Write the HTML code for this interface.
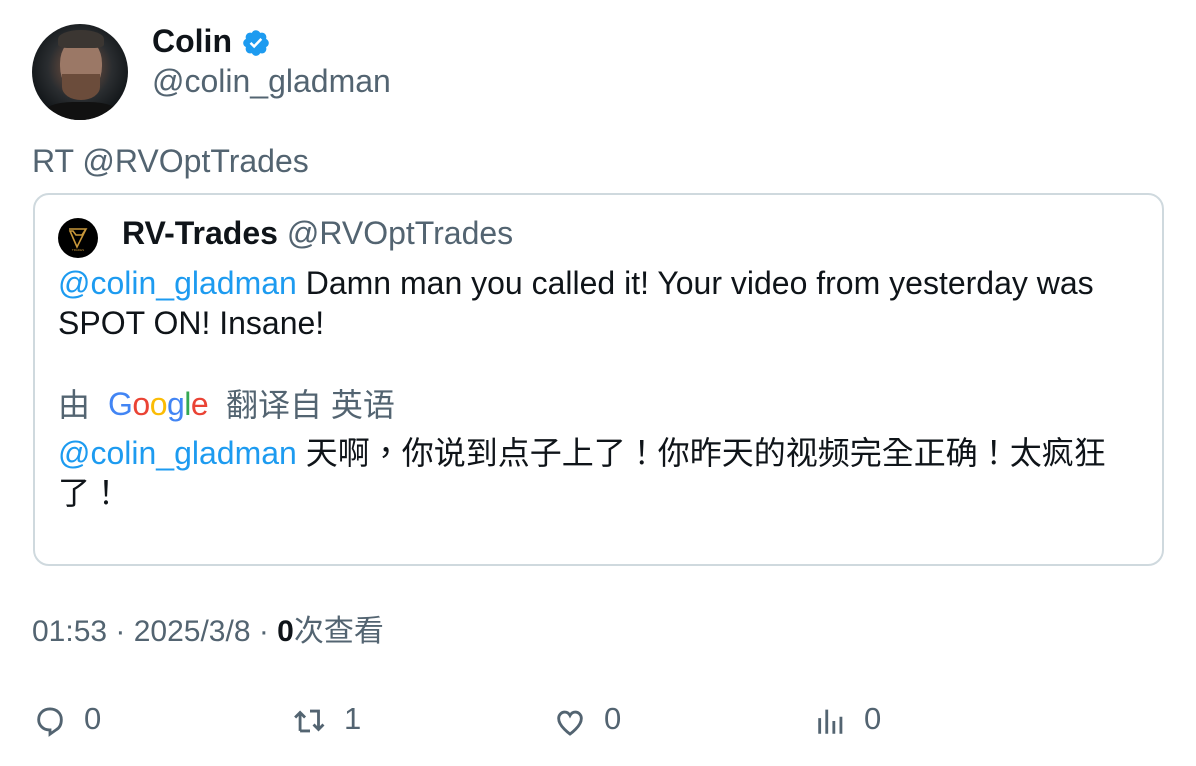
<!DOCTYPE html>
<html><head><meta charset="utf-8"><style>
*{margin:0;padding:0;box-sizing:border-box}
body{width:1196px;height:766px;background:#fff;position:relative;overflow:hidden;font-family:"Liberation Sans","Noto Sans CJK SC",sans-serif;color:#0f1419}
.a{position:absolute;white-space:nowrap}
.g{color:#536471}
.b{color:#1d9bf0}
.tc{font-family:"Liberation Sans","Noto Sans CJK TC",sans-serif}
</style></head><body>
<div class="a" style="left:32px;top:24px;width:96px;height:96px;border-radius:50%;background:radial-gradient(circle at 50% 45%,#8a6a58 0,#5a443a 22%,#2a2d30 45%,#14181b 70%);overflow:hidden">
<div style="position:absolute;left:28px;top:14px;width:42px;height:56px;border-radius:45% 45% 50% 50%;background:#9b7866"></div>
<div style="position:absolute;left:30px;top:50px;width:38px;height:26px;border-radius:0 0 50% 50%;background:#6b4c3b"></div>
<div style="position:absolute;left:26px;top:6px;width:46px;height:18px;border-radius:50% 50% 20% 20%;background:#3b3632"></div>
<div style="position:absolute;left:10px;top:78px;width:78px;height:30px;border-radius:40% 40% 0 0;background:#111"></div>
</div>
<div class="a" style="left:152px;top:22px;font-size:32px;font-weight:bold;line-height:38px">Colin</div>
<svg class="a" style="left:241px;top:28px" width="30" height="30" viewBox="0 0 24 24"><path fill="#1d9bf0" d="M22.25 12c0-1.43-.88-2.670-2.19-3.34.46-1.39.2-2.9-.81-3.910s-2.520-1.270-3.910-.81c-.66-1.310-1.910-2.190-3.340-2.190s-2.670.88-3.330 2.190c-1.400-.46-2.910-.2-3.920.81s-1.260 2.520-.8 3.910c-1.310.67-2.200 1.910-2.200 3.340s.89 2.670 2.200 3.340c-.46 1.390-.21 2.900.8 3.910s2.520 1.260 3.910.81c.67 1.310 1.910 2.190 3.340 2.190s2.680-.88 3.340-2.190c1.390.45 2.900.2 3.910-.81s1.270-2.520.81-3.910c1.310-.67 2.190-1.910 2.190-3.340z"/><path fill="#fff" d="M10.54 16.2l-3.64-3.64 1.41-1.41 2.17 2.17 5.07-5.3 1.45 1.38z"/></svg>
<div class="a g" style="left:152px;top:62px;font-size:32px;line-height:38px">@colin_gladman</div>
<div class="a g" style="left:32px;top:142px;font-size:32px;line-height:38px">RT @RVOptTrades</div>
<div class="a" style="left:33px;top:193px;width:1131px;height:373px;border:2px solid #cfd9de;border-radius:16px"></div>
<div class="a" style="left:58px;top:218px;width:40px;height:40px;border-radius:50%;background:#000">
<svg width="40" height="40" viewBox="0 0 40 40"><path d="M11 11h17l-4 6h-6l-3-4h-3l7 16 9-18" fill="none" stroke="#c8973a" stroke-width="1.6"/><text x="20" y="33" font-size="3" fill="#c8973a" text-anchor="middle">TRADES</text></svg></div>
<div class="a" style="left:122px;top:214px;font-size:32px;line-height:38px"><b>RV-Trades</b> <span class="g">@RVOptTrades</span></div>
<div class="a" style="left:58px;top:263px;font-size:32px;line-height:40px"><span class="b">@colin_gladman</span> Damn man you called it! Your video from yesterday was<br>SPOT ON! Insane!</div>
<div class="a g" style="left:58px;top:385px;font-size:32px;line-height:40px">由</div>
<div class="a" style="left:108px;top:384px;font-size:32px;line-height:40px;letter-spacing:-0.5px"><span style="color:#4285f4">G</span><span style="color:#ea4335">o</span><span style="color:#fbbc05">o</span><span style="color:#4285f4">g</span><span style="color:#34a853">l</span><span style="color:#ea4335">e</span></div>
<div class="a g" style="left:226px;top:385px;font-size:32px;line-height:40px">翻译自 英语</div>
<div class="a tc" style="left:58px;top:433px;font-size:32px;line-height:40px"><span class="b">@colin_gladman</span> 天啊，你说到点子上了！你昨天的视频完全正确！太疯狂<br>了！</div>
<div class="a g" style="left:32px;top:612px;font-size:30px;line-height:40px">01:53 · 2025/3/8 · <b style="color:#0f1419">0</b>次查看</div>
<svg class="a" style="left:33px;top:704px" width="34" height="34" viewBox="0 0 24 24"><path fill="none" stroke="#536471" stroke-width="2" d="M12 3.5c-4.7 0-8 3.2-8 7.5 0 4.1 3.3 7.3 7.5 7.3h.5v3l4.5-3.2C19 16.6 20 14 20 11c0-4.4-3.3-7.5-8-7.5z"/></svg>
<div class="a g" style="left:84px;top:700px;font-size:31px;line-height:38px">0</div>
<svg class="a" style="left:292px;top:704px" width="36" height="34" viewBox="0 0 24 24"><path fill="none" stroke="#536471" stroke-width="2" d="M5 19V6M1.5 9.5L5 6l3.5 3.5M5 19h7M12 5h6v13M14.5 14.5L18 18l3.5-3.5"/></svg>
<div class="a g" style="left:344px;top:700px;font-size:31px;line-height:38px">1</div>
<svg class="a" style="left:553px;top:705px" width="34" height="34" viewBox="0 0 24 24"><path fill="none" stroke="#536471" stroke-width="2" d="M12 20.5s-8-5.5-8-11c0-2.7 2-4.5 4.2-4.5 1.7 0 3 .9 3.8 2.4.8-1.5 2.1-2.4 3.8-2.4C18 5 20 6.8 20 9.5c0 5.5-8 11-8 11z"/></svg>
<div class="a g" style="left:604px;top:700px;font-size:31px;line-height:38px">0</div>
<svg class="a" style="left:814px;top:704px" width="34" height="34" viewBox="0 0 24 24"><path fill="none" stroke="#536471" stroke-width="2" d="M4 21V10M9 21V4M14 21V12M19 21V9"/></svg>
<div class="a g" style="left:864px;top:700px;font-size:31px;line-height:38px">0</div>
</body></html>
